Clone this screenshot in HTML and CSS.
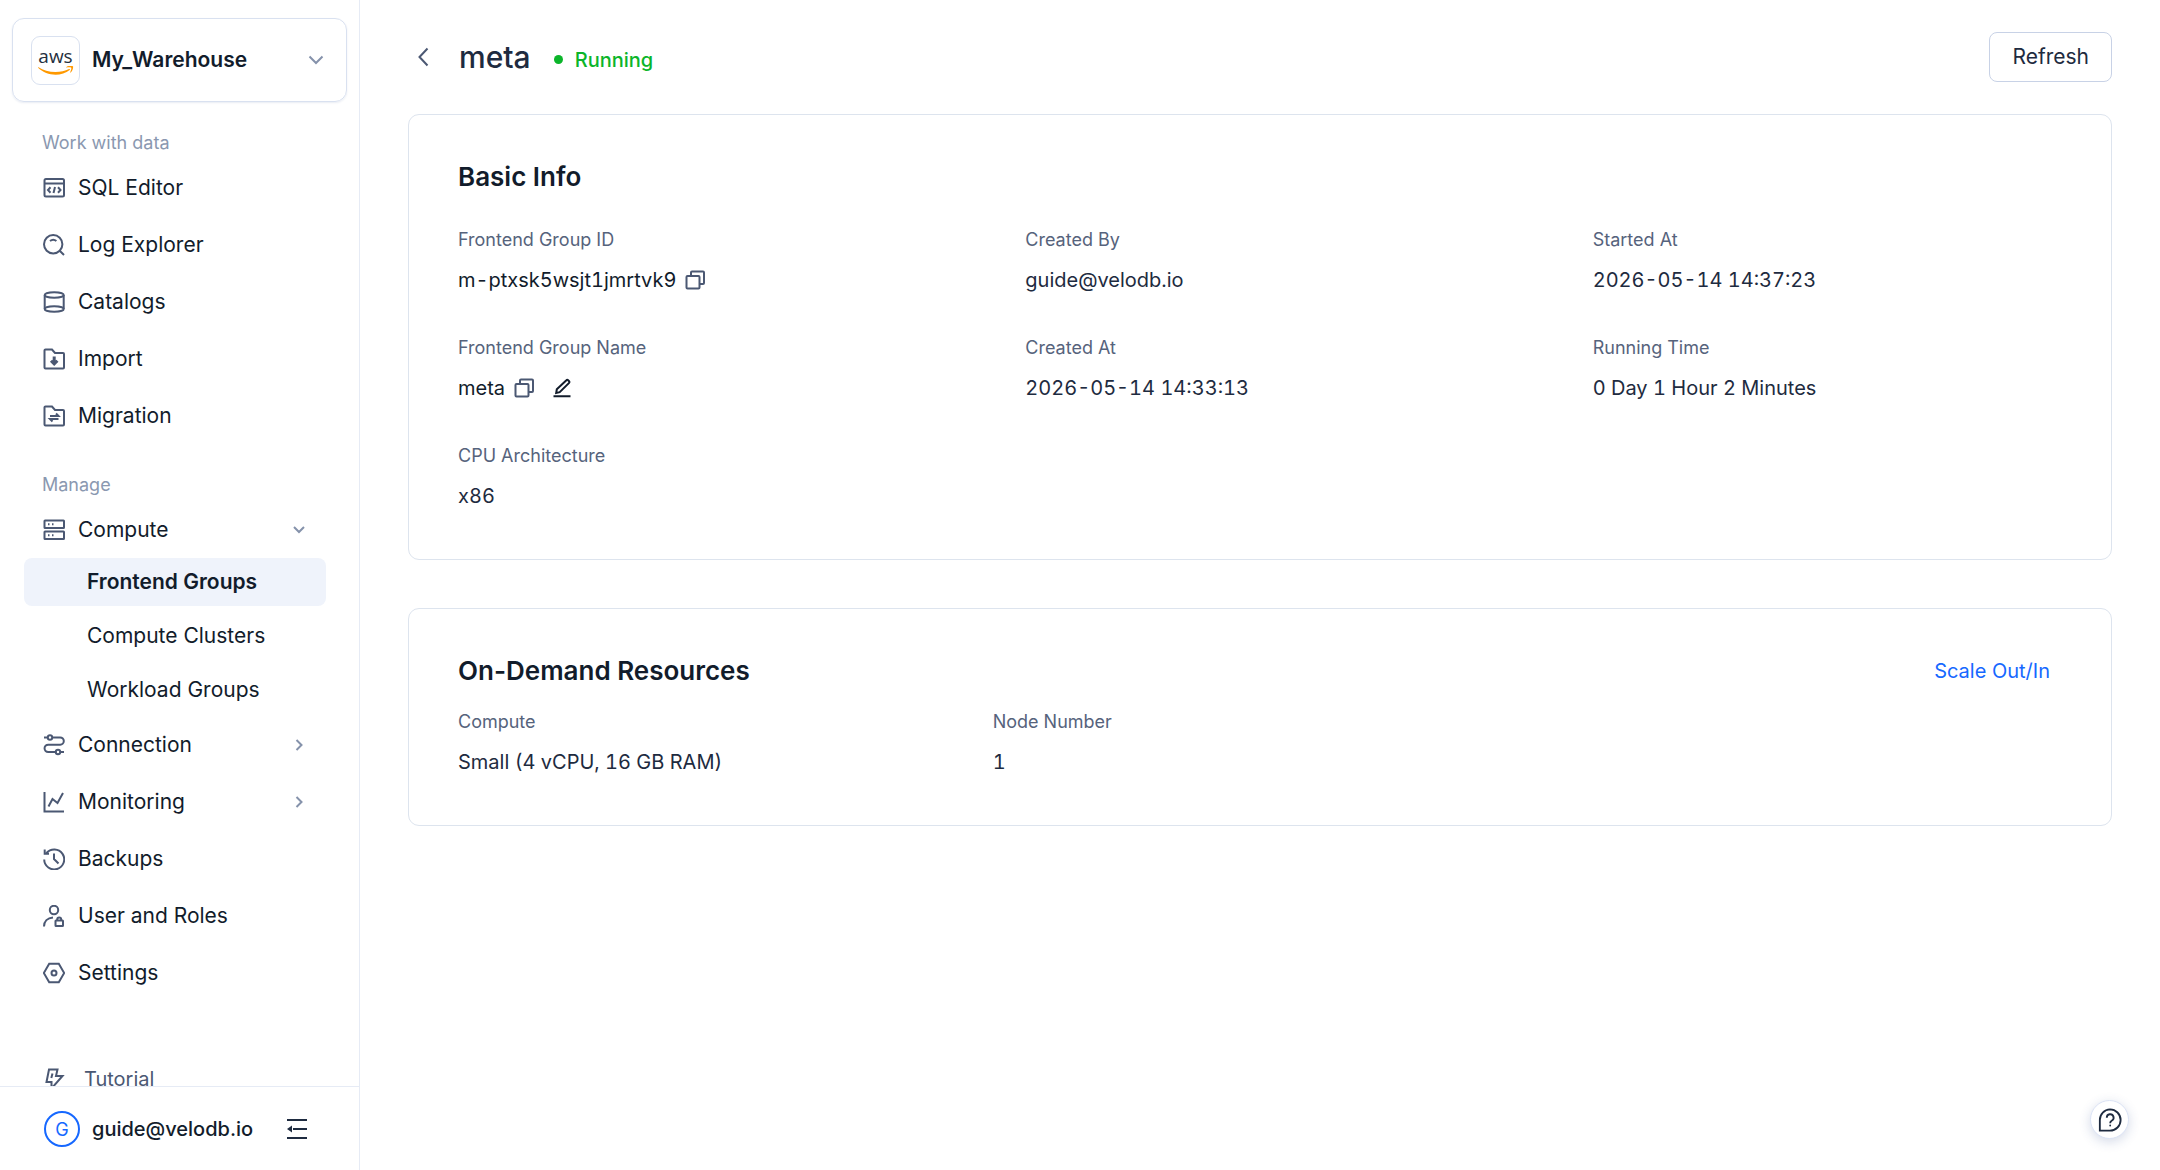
FILE: index.html
```
<!DOCTYPE html>
<html lang="en">
  <head>
    <meta charset="UTF-8" />
    <meta name="viewport" content="width=device-width, initial-scale=1" />
    <title>meta - Frontend Groups</title>
    <link rel="stylesheet" href="styles.css">
  </head>
  <body>

    <!-- Sidebar -->
    <aside class="sidebar">
      <button class="warehouse" type="button">
        <span class="cloud-logo">
          <span class="cloud-name">aws</span>
          <svg class="cloud-smile" viewBox="0 0 36 10" fill="#ff9900">
            <path d="M0.6 1.2C5 4.4 11 6 17.5 6c5 0 9.500-1 13.600-2.900.7-.3 1.200.4.6.9C28 7.100 22.500 8.700 17.600 8.700 11 8.700 4.900 6.200.3 2 -.1 1.500.2 1 .6 1.200z" />
            <path d="M33.200 1.700c-.6-.7-3.400-.4-4.700-.2-.4 0-.5-.3-.1-.6C30.700-.7 34.500-.2 35 .3c.4.6-.1 4.400-2.300 6.200-.3.300-.7.1-.5-.3.500-1.200 1.500-3.900 1-4.500z" />
          </svg>
        </span>
        <span class="warehouse-name">My_Warehouse</span>
        <svg class="chevron" viewBox="0 0 16 16"><path d="M1.500 4.500 8 11l6.500-6.500" /></svg>
      </button>

      <nav class="menu">
        <h2 class="menu-title">Work with data</h2>
        <a class="menu-item" href="#">
          <svg class="icon" viewBox="0 0 22 22"><rect x="1.500" y="2" width="19.500" height="17.500" rx="1.500" /><path d="M1.500 6.500h19.500M7.500 10.300 5 13l2.500 2.700M15 10.300l2.500 2.700-2.500 2.700M12 10l-1.500 6" /></svg>
          SQL Editor
        </a>
        <a class="menu-item" href="#">
          <svg class="icon" viewBox="0 0 22 22"><circle cx="10.200" cy="10.200" r="9.200" /><path d="m16.700 16.700 4.300 4.300M7 7a5 5 0 0 1 6.400 0" /></svg>
          Log Explorer
        </a>
        <a class="menu-item" href="#">
          <svg class="icon" viewBox="0 0 22 22"><ellipse cx="11.200" cy="4" rx="9.500" ry="2.800" /><path d="M1.700 4v14M20.700 4v14" /><ellipse cx="11.200" cy="18" rx="9.500" ry="2.800" /></svg>
          Catalogs
        </a>
        <a class="menu-item" href="#">
          <svg class="icon" viewBox="0 0 22 22"><path d="M1.500 2.500a1 1 0 0 1 1-1H9l3 3.500h8a1 1 0 0 1 1 1v13.500a1 1 0 0 1-1 1H2.500a1 1 0 0 1-1-1z" /><path class="bold" d="M11.200 8.500V16M8 12.800l3.200 3.200 3.200-3.200" /></svg>
          Import
        </a>
        <a class="menu-item" href="#">
          <svg class="icon" viewBox="0 0 22 22"><path d="M1.500 2.500a1 1 0 0 1 1-1H9l3 3.500h8a1 1 0 0 1 1 1v13.500a1 1 0 0 1-1 1H2.500a1 1 0 0 1-1-1z" /><path d="M7 11h8.500L13 8.500M15.500 14H7l2.500 2.500" /></svg>
          Migration
        </a>

        <h2 class="menu-title spaced">Manage</h2>
        <a class="menu-item" href="#">
          <svg class="icon" viewBox="0 0 22 22"><rect x="1.500" y="1.500" width="19.500" height="7.500" rx=".5" /><rect x="1.500" y="12.500" width="19.500" height="7.500" rx=".5" /><path d="M5 5.300h1.500M9 5.300h1.500M5 16.300h1.500M9 16.300h1.500" /></svg>
          Compute
          <svg class="arrow" viewBox="0 0 16 16"><path d="m3 5 5 5 5-5" /></svg>
        </a>
        <div class="submenu">
          <a class="submenu-item active" href="#">Frontend Groups</a>
          <a class="submenu-item" href="#">Compute Clusters</a>
          <a class="submenu-item" href="#">Workload Groups</a>
        </div>
        <a class="menu-item" href="#">
          <svg class="icon" viewBox="0 0 22 22"><circle cx="7" cy="3.500" r="2.200" /><circle cx="15" cy="18" r="2.200" /><path d="M1 3.500h3.800M9.200 3.500h8a3.600 3.600 0 0 1 0 7.200h-12a3.600 3.600 0 0 0 0 7.300h7.600M17.200 18H21" /></svg>
          Connection
          <svg class="arrow" viewBox="0 0 16 16"><path d="m5.500 3 5 5-5 5" /></svg>
        </a>
        <a class="menu-item" href="#">
          <svg class="icon" viewBox="0 0 22 22"><path d="M1.500 1v19.500H21M5.500 15.500 9.500 8l5 4L20 2" /></svg>
          Monitoring
          <svg class="arrow" viewBox="0 0 16 16"><path d="m5.500 3 5 5-5 5" /></svg>
        </a>
        <a class="menu-item" href="#">
          <svg class="icon" viewBox="0 0 22 22"><path d="M3.500 5A10 10 0 1 1 1.200 11.500M1.700 1.500v4.300H6M11 5.500V11l4.500 4.500" /></svg>
          Backups
        </a>
        <a class="menu-item" href="#">
          <svg class="icon" viewBox="0 0 22 22"><circle cx="11" cy="5" r="4.200" /><path d="M1 21.500c0-5 3.500-8.500 9-9" /><rect x="12.500" y="15.500" width="7.500" height="5.500" rx=".5" /><path d="M14.200 15.500v-1a2 2 0 0 1 4 0v1" /></svg>
          User and Roles
        </a>
        <a class="menu-item" href="#">
          <svg class="icon" viewBox="0 0 22 22"><path d="M6.200 1.700h9.600L21.200 11l-5.400 9.300H6.200L.8 11z" /><circle cx="11" cy="11" r="2.500" /></svg>
          Settings
        </a>
        <a class="menu-item tutorial" href="#">
          <svg class="icon" viewBox="0 0 22 22"><path d="M6 1.500h8.500L13 8h6.500L8.500 20.500V14H3.500zM9.500 5.500 8.300 10" /></svg>
          Tutorial
        </a>
      </nav>

      <div class="account">
        <span class="avatar">G</span>
        <span class="account-name">guide@velodb.io</span>
        <button class="icon-button" type="button" aria-label="Collapse menu">
          <svg class="icon collapse" viewBox="0 0 22 22"><path d="M1 2h20M7 11h14M1 20h20" /><path class="fill" d="M6 7.500v7L1 11z" /></svg>
        </button>
      </div>
    </aside>

    <!-- Content -->
    <main class="content">
      <header class="page-header">
        <a class="back" href="#" aria-label="Back">
          <svg class="icon" viewBox="0 0 22 22"><path d="m15.500 2.500-8 8.500 8 8.500" /></svg>
        </a>
        <h1>meta</h1>
        <span class="status">Running</span>
        <button class="refresh" type="button">Refresh</button>
      </header>

      <section class="card">
        <h2 class="card-title">Basic Info</h2>
        <dl class="info-grid">
          <div class="field">
            <dt>Frontend Group ID</dt>
            <dd class="strong">
              m-ptxsk5wsjt1jmrtvk9
              <button class="icon-button" type="button" aria-label="Copy ID">
                <svg class="copy" viewBox="0 0 20 20"><rect x="1.500" y="6" width="13" height="12.500" rx="1" /><path d="M6 6V2.500a1 1 0 0 1 1-1h11a1 1 0 0 1 1 1V13a1 1 0 0 1-1 1h-3.500" /></svg>
              </button>
            </dd>
          </div>
          <div class="field">
            <dt>Created By</dt>
            <dd>guide@velodb.io</dd>
          </div>
          <div class="field">
            <dt>Started At</dt>
            <dd>2026-05-14 14:37:23</dd>
          </div>
          <div class="field">
            <dt>Frontend Group Name</dt>
            <dd class="strong">
              meta
              <button class="icon-button" type="button" aria-label="Copy name">
                <svg class="copy" viewBox="0 0 20 20"><rect x="1.500" y="6" width="13" height="12.500" rx="1" /><path d="M6 6V2.500a1 1 0 0 1 1-1h11a1 1 0 0 1 1 1V13a1 1 0 0 1-1 1h-3.500" /></svg>
              </button>
              <button class="icon-button edit" type="button" aria-label="Edit name">
                <svg class="pencil" viewBox="0 0 20 20"><path d="M1.500 18.200h17M4.200 15l.6-3.700 9.600-9.100a1.200 1.200 0 0 1 1.700 0l1 1a1.200 1.200 0 0 1 0 1.700l-9.400 9.300z" /></svg>
              </button>
            </dd>
          </div>
          <div class="field">
            <dt>Created At</dt>
            <dd>2026-05-14 14:33:13</dd>
          </div>
          <div class="field">
            <dt>Running Time</dt>
            <dd>0 Day 1 Hour 2 Minutes</dd>
          </div>
          <div class="field">
            <dt>CPU Architecture</dt>
            <dd>x86</dd>
          </div>
        </dl>
      </section>

      <section class="card">
        <div class="card-head">
          <h2 class="card-title">On-Demand Resources</h2>
          <a class="scale-link" href="#">Scale Out/In</a>
        </div>
        <dl class="resource-grid">
          <div class="field">
            <dt>Compute</dt>
            <dd>Small (4 vCPU, 16 GB RAM)</dd>
          </div>
          <div class="field">
            <dt>Node Number</dt>
            <dd>1</dd>
          </div>
        </dl>
      </section>
    </main>

    <button class="help" type="button" aria-label="Help">
      <svg viewBox="0 0 26 26"><path d="M13 1.500A11.500 11.500 0 1 1 13 24.500H2V13A11.500 11.500 0 0 1 13 1.500z" /><path d="M9.500 10.500a3.700 3.700 0 1 1 5.300 3.300c-1.200.6-1.600 1.200-1.600 2.600" /><circle class="fill" cx="13.200" cy="19" r="1" /></svg>
    </button>
  </body>
</html>
```
FILE: styles.css
```
* {
  box-sizing: border-box;
}

body {
  margin: 0;
  display: flex;
  min-height: 100vh;
  font-family: Inter, "Liberation Sans", sans-serif;
  font-size: 20px;
  line-height: 30px;
  color: #1e2b40;
  background: #fff;
}

h1,
h2,
dl,
dd {
  margin: 0;
}

a {
  color: inherit;
  text-decoration: none;
}

button {
  font: inherit;
  color: inherit;
  background: none;
  cursor: pointer;
}

svg {
  display: block;
  flex: none;
  fill: none;
  stroke: currentColor;
  stroke-width: 2;
}

svg .fill {
  fill: currentColor;
  stroke: none;
}

svg .bold {
  stroke-width: 3;
}

/* Sidebar */
.sidebar {
  position: sticky;
  top: 0;
  flex: none;
  display: flex;
  flex-direction: column;
  width: 360px;
  height: 100vh;
  border-right: 1px solid #e6ebf5;
}

.warehouse {
  flex: none;
  display: flex;
  align-items: center;
  gap: 12px;
  height: 84px;
  margin: 18px 12px 0;
  padding: 0 22px 0 18px;
  border: 1px solid #d9e1f0;
  border-radius: 12px;
  box-shadow: 0 1px 2px rgba(40, 70, 140, 0.1);
}

.cloud-logo {
  display: flex;
  flex-direction: column;
  align-items: center;
  width: 49px;
  height: 49px;
  padding-top: 9px;
  border: 1px solid #d9e1f0;
  border-radius: 9px;
}

.cloud-name {
  font-family: "Open Sans", sans-serif;
  font-size: 19px;
  line-height: 20px;
  font-weight: 500;
  color: #252f3e;
}

.cloud-smile {
  width: 36px;
  height: 10px;
  stroke: none;
  fill: #ff9900;
}

.warehouse-name {
  flex: 1;
  text-align: left;
  font-size: 21px;
  font-weight: 600;
  color: #121c2b;
}

.chevron {
  width: 16px;
  height: 16px;
  color: #8592ab;
}

.menu {
  flex: 1;
  min-height: 0;
  overflow: hidden;
  padding: 24px 33px 0 24px;
  font-size: 21px;
  color: #121c2b;
}

.menu-title {
  padding-left: 18px;
  font-size: 18px;
  line-height: 33px;
  font-weight: 400;
  color: #8a98b0;
}

.menu-title.spaced {
  margin-top: 24px;
}

.menu-item {
  display: flex;
  align-items: center;
  gap: 13px;
  height: 57px;
  padding: 0 19px;
}

.icon {
  width: 22px;
  height: 22px;
  color: #4b5873;
}

.arrow {
  width: 16px;
  height: 16px;
  margin-left: auto;
  color: #8592ab;
}

.submenu {
  display: flex;
  flex-direction: column;
  gap: 6px;
  margin-bottom: 2px;
}

.submenu-item {
  height: 48px;
  padding-left: 63px;
  line-height: 48px;
  border-radius: 8px;
}

.submenu-item.active {
  font-weight: 600;
  background: #eff3fb;
}

.tutorial {
  gap: 19px;
  margin-top: 49px;
  font-size: 20px;
  color: #4b5873;
}

.account {
  flex: none;
  display: flex;
  align-items: center;
  height: 84px;
  padding: 0 51px 0 44px;
  border-top: 1px solid #e6ebf5;
}

.avatar {
  width: 36px;
  height: 36px;
  border: 2px solid #1668ff;
  border-radius: 50%;
  font-size: 18px;
  line-height: 34px;
  text-align: center;
  color: #1668ff;
}

.account-name {
  flex: 1;
  margin-left: 12px;
  font-weight: 500;
  color: #121c2b;
}

.icon-button {
  padding: 0;
  border: none;
}

.collapse {
  color: #1e2b40;
}

/* Content */
.content {
  flex: 1;
  min-width: 0;
  display: flex;
  flex-direction: column;
  gap: 48px;
  padding: 32px 48px 48px;
}

.page-header {
  display: flex;
  align-items: center;
  height: 50px;
  margin-bottom: -16px;
}

.back {
  margin: 0 25px 0 4px;
}

h1 {
  font-size: 30px;
  font-weight: 500;
}

.status {
  display: flex;
  align-items: center;
  gap: 12px;
  margin: 5px 0 0 23px;
  font-weight: 500;
  color: #0bb52a;
}

.status::before {
  content: "";
  width: 9px;
  height: 9px;
  border-radius: 50%;
  background: currentColor;
}

.refresh {
  height: 50px;
  margin-left: auto;
  padding: 0 22px;
  border: 1px solid #c8d2e6;
  border-radius: 8px;
  font-size: 21px;
}

.card {
  padding: 44px 49px 48px;
  border: 1px solid #dde4ee;
  border-radius: 11px;
}

.card-head {
  display: flex;
  align-items: center;
  justify-content: space-between;
}

.card-title {
  font-size: 26px;
  line-height: 36px;
  font-weight: 600;
  color: #121c2b;
}

.scale-link {
  padding: 0 12px;
  color: #1668ff;
}

.info-grid {
  display: grid;
  grid-template-columns: repeat(3, 1fr);
  gap: 38px 98px;
  margin-top: 30px;
}

.resource-grid {
  display: grid;
  grid-template-columns: repeat(3, 1fr);
  margin-top: 18px;
}

.field dt {
  margin-bottom: 10px;
  font-size: 18px;
  color: #56637c;
}

.field dd {
  display: flex;
  align-items: center;
  gap: 9px;
  font-variant-numeric: tabular-nums;
}

.field .strong {
  color: #121c2b;
}

.copy,
.pencil {
  width: 20px;
  height: 20px;
}

.copy {
  color: #4b5873;
}

.edit {
  margin-left: 9px;
}

/* Floating help button */
.help {
  position: fixed;
  right: 31px;
  bottom: 31px;
  display: flex;
  align-items: center;
  justify-content: center;
  width: 39px;
  height: 39px;
  padding: 0;
  border: 1px solid #dbe3f5;
  border-radius: 50%;
  background: #fff;
  box-shadow: 0 3px 12px rgba(40, 70, 140, 0.2);
}

.help svg {
  width: 24px;
  height: 24px;
}
```
